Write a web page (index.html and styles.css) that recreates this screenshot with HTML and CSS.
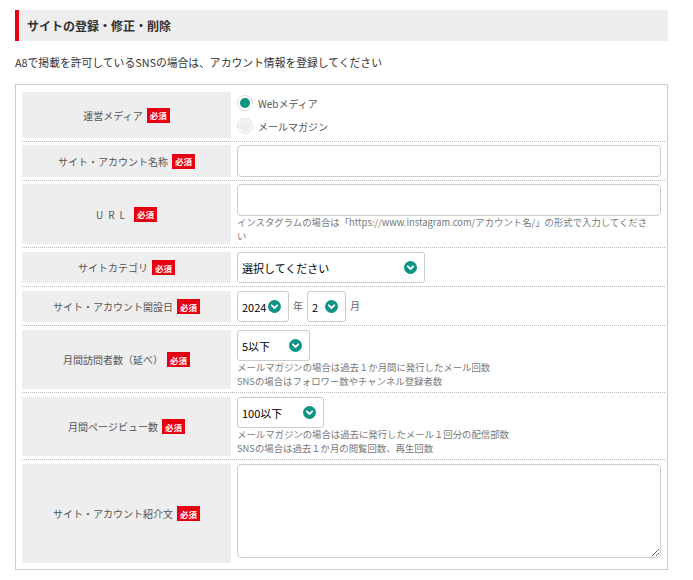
FILE: index.html
```html
<!DOCTYPE html>
<html lang="ja">
<head>
<meta charset="utf-8">
<link rel="stylesheet" href="styles.css">
</head>
<body>
<div class="page">
  <h2 class="title">サイトの登録・修正・削除</h2>
  <p class="intro">A8で掲載を許可しているSNSの場合は、アカウント情報を登録してください</p>
  <div class="form">
    <div class="row">
      <div class="label">運営メディア<span class="req">必須</span></div>
      <div class="field radios">
        <label class="radio"><span class="dot on"></span>Webメディア</label>
        <label class="radio"><span class="dot off"></span>メールマガジン</label>
      </div>
    </div>
    <div class="row">
      <div class="label">サイト・アカウント名称<span class="req">必須</span></div>
      <div class="field"><input class="text" type="text"></div>
    </div>
    <div class="row">
      <div class="label"><span class="url">URL</span><span class="req">必須</span></div>
      <div class="field">
        <input class="text" type="text">
        <p class="help wide">インスタグラムの場合は「https://www.instagram.com/アカウント名/」の形式で入力してください</p>
      </div>
    </div>
    <div class="row tall">
      <div class="label">サイトカテゴリ<span class="req">必須</span></div>
      <div class="field">
        <div class="select w188"><span>選択してください</span><svg class="chev" viewBox="0 0 13 13"><circle cx="6.5" cy="6.5" r="6.5"/><path d="M3.8 5.3 L6.5 8 L9.2 5.3"/></svg></div>
      </div>
    </div>
    <div class="row tall">
      <div class="label">サイト・アカウント開設日<span class="req">必須</span></div>
      <div class="field date">
        <div class="select w52"><span>2024</span><svg class="chev" viewBox="0 0 13 13"><circle cx="6.5" cy="6.5" r="6.5"/><path d="M3.8 5.3 L6.5 8 L9.2 5.3"/></svg></div>
        <span class="unit">年</span>
        <div class="select w39"><span>2</span><svg class="chev" viewBox="0 0 13 13"><circle cx="6.5" cy="6.5" r="6.5"/><path d="M3.8 5.3 L6.5 8 L9.2 5.3"/></svg></div>
        <span class="unit">月</span>
      </div>
    </div>
    <div class="row tall">
      <div class="label">月間訪問者数（延べ）<span class="req">必須</span></div>
      <div class="field">
        <div class="select w73"><span>5以下</span><svg class="chev" viewBox="0 0 13 13"><circle cx="6.5" cy="6.5" r="6.5"/><path d="M3.8 5.3 L6.5 8 L9.2 5.3"/></svg></div>
        <p class="help">メールマガジンの場合は過去１か月間に発行したメール回数<br>SNSの場合はフォロワー数やチャンネル登録者数</p>
      </div>
    </div>
    <div class="row tall">
      <div class="label">月間ページビュー数<span class="req">必須</span></div>
      <div class="field">
        <div class="select w87"><span>100以下</span><svg class="chev" viewBox="0 0 13 13"><circle cx="6.5" cy="6.5" r="6.5"/><path d="M3.8 5.3 L6.5 8 L9.2 5.3"/></svg></div>
        <p class="help">メールマガジンの場合は過去に発行したメール１回分の配信部数<br>SNSの場合は過去１か月の閲覧回数、再生回数</p>
      </div>
    </div>
    <div class="row tall last">
      <div class="label">サイト・アカウント紹介文<span class="req">必須</span></div>
      <div class="field area"><textarea class="textarea"></textarea></div>
    </div>
  </div>
</div>
</body>
</html>
```

FILE: styles.css
```css
* { box-sizing: border-box; }
body {
  margin: 0;
  font-family: "Noto Sans CJK JP", "Noto Sans", sans-serif;
  color: #333;
  background: #fff;
}
.page {
  width: 653px;
  margin: 10px 0 0 15px;
}
.title {
  margin: 0;
  height: 31px;
  line-height: 31px;
  background: #eee;
  border-left: 4px solid #e60012;
  padding-left: 8px;
  font-size: 12px;
  font-weight: bold;
  color: #333;
}
.intro {
  margin: 13px 0 14px;
  font-size: 10.8px;
  line-height: 16px;
  color: #333;
}
.form {
  border: 1px solid #ccc;
  padding: 4px 2px 3px 6px;
}
.row {
  display: flex;
  gap: 6px;
  padding: 3px 0;
  border-bottom: 1px dotted #bbb;
}
.row.tall { padding-top: 4px; }
.row.last { border-bottom: none; }
.label {
  width: 209px;
  flex: none;
  background: #eee;
  display: flex;
  align-items: center;
  justify-content: center;
  gap: 4px;
  font-size: 10px;
  color: #555;
}
.url { letter-spacing: 5px; }
.req {
  display: inline-flex;
  align-items: center;
  justify-content: center;
  width: 23px;
  height: 15px;
  background: #e60012;
  color: #fff;
  font-size: 8.5px;
  font-weight: bold;
}
.field {
  flex: 1;
  padding-right: 4px;
  min-width: 0;
}
.radios {
  display: flex;
  flex-direction: column;
  gap: 7px;
  padding-top: 3px;
  padding-bottom: 4px;
}
.radio {
  display: flex;
  align-items: center;
  gap: 5px;
  font-size: 10px;
  color: #555;
  height: 16px;
}
.dot {
  width: 16px;
  height: 16px;
  border-radius: 50%;
  border: 1px solid #ddd;
  background: #fff;
  display: flex;
  align-items: center;
  justify-content: center;
}
.dot.on::after {
  content: "";
  width: 10px;
  height: 10px;
  border-radius: 50%;
  background: #0e9484;
}
.dot.off::after {
  content: "";
  width: 12px;
  height: 12px;
  border-radius: 50%;
  background: #eee;
}
.text {
  display: block;
  width: 100%;
  height: 32px;
  border: 1px solid #ccc;
  border-radius: 4px;
  margin: 0;
  background: #fff;
}
.help {
  margin: 0;
  font-size: 9.4px;
  line-height: 13.5px;
  color: #777;
  padding-bottom: 1px;
}
.help.wide {
  padding-right: 6px;
}
.select {
  height: 31px;
  border: 1px solid #ccc;
  border-radius: 3px;
  display: flex;
  align-items: center;
  justify-content: space-between;
  padding: 0 7px 0 4px;
  font-size: 11px;
  color: #000;
  background: #fff;
}
.w188 { width: 188px; }
.w52 { width: 52px; }
.w39 { width: 39px; }
.w73 { width: 73px; }
.w87 { width: 87px; }
.chev {
  width: 13px;
  height: 13px;
  flex: none;
}
.chev circle { fill: #0e9484; }
.chev path {
  fill: none;
  stroke: #fff;
  stroke-width: 1.8;
  stroke-linecap: round;
  stroke-linejoin: round;
}
.date {
  display: flex;
  align-items: center;
  gap: 4px;
}
.unit {
  font-size: 10px;
  color: #666;
  margin-top: -2px;
}
.area { padding-bottom: 5px; }
.textarea {
  display: block;
  width: 100%;
  height: 94px;
  border: 1px solid #ccc;
  border-radius: 4px;
  margin: 0;
  resize: both;
}
```
